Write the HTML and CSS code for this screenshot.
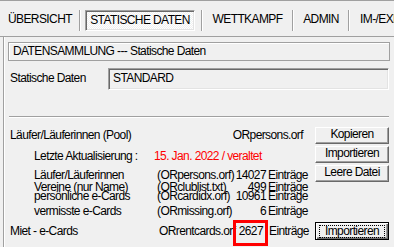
FILE: index.html
```html
<!DOCTYPE html>
<html lang="de">
<head>
<meta charset="utf-8">
<title>Statische Daten</title>
<link rel="stylesheet" href="styles.css">
</head>
<body>
<nav class="tabs">
  <span class="tab first">ÜBERSICHT</span>
  <span class="sep"></span>
  <span class="tab active">STATISCHE DATEN</span>
  <span class="sep"></span>
  <span class="tab t-wk">WETTKAMPF</span>
  <span class="sep"></span>
  <span class="tab t-admin">ADMIN</span>
  <span class="sep"></span>
  <span class="tab t-ie">IM-/EXPORT</span>
</nav>
<main class="panel">
  <div class="caption-box">DATENSAMMLUNG --- Statische Daten</div>
  <div class="field-row">
    <span class="field-label">Statische Daten</span>
    <div class="field">STANDARD</div>
  </div>
  <div class="rule"></div>
  <section class="lower">
    <div class="info">
      <div class="row r-pool"><span>Läufer/Läuferinnen (Pool)</span><span>ORpersons.orf</span></div>
      <div class="row r-upd"><span class="upd-label">Letzte Aktualisierung :</span><span class="red">15. Jan. 2022 / veraltet</span></div>
      <div class="row stat h12"><span>Läufer/Läuferinnen</span><span>(ORpersons.orf)</span><span class="num">14027</span><span class="unit">Einträge</span></div>
      <div class="row stat h9"><span>Vereine (nur Name)</span><span>(ORclublist.txt)</span><span class="num">499</span><span class="unit">Einträge</span></div>
      <div class="row stat h15"><span>persönliche e-Cards</span><span>(ORcardidx.orf)</span><span class="num">10961</span><span class="unit">Einträge</span></div>
      <div class="row stat h12"><span>vermisste e-Cards</span><span>(ORmissing.orf)</span><span class="num">6</span><span class="unit">Einträge</span></div>
    </div>
    <div class="buttons">
      <div class="btn">Kopieren</div>
      <div class="btn">Importieren</div>
      <div class="btn">Leere Datei</div>
    </div>
  </section>
  <div class="miet">
    <span class="m-label">Miet - e-Cards</span>
    <span class="m-file">ORrentcards.orf</span>
    <span class="m-count">2627</span>
    <span class="m-unit">Einträge</span>
    <div class="btn-default"><span class="focus">Importieren</span></div>
  </div>
</main>
</body>
</html>
```
FILE: styles.css
```css
* { box-sizing: border-box; }
html, body { margin: 0; padding: 0; }
body {
  width: 394px;
  height: 247px;
  overflow: hidden;
  background: #f0f0f0;
  font-family: "Liberation Sans", Arial, sans-serif;
  font-size: 12px;
  letter-spacing: -0.6px;
  color: #000;
}

/* tab bar */
.tabs {
  display: flex;
  align-items: flex-start;
  height: 37px;
  border-top: 1px solid #a0a0a0;
  border-bottom: 1px solid #a0a0a0;
  padding: 9px 0 0 8px;
  white-space: nowrap;
  overflow: hidden;
}
.tab {
  flex: none;
  height: 21px;
  line-height: 19px;
  padding-bottom: 2px;
  text-align: center;
}
.tab.first { width: 71px; text-align: left; }
.t-wk { width: 89px; }
.t-admin { width: 54px; }
.t-ie { padding-left: 10px; text-align: left; }
.tab.active {
  width: 110px;
  margin: 0 6px 0 4px;
  padding: 1px 0;
  line-height: 17px;
  border: 1px solid;
  border-color: #a0a0a0 #fff #fff #a0a0a0;
  box-shadow: inset 1px 1px #696969, inset -1px -1px #e3e3e3;
  background-image: repeating-conic-gradient(#fff 0 25%, #f0f0f0 0 50%);
  background-size: 2px 2px;
}
.sep {
  width: 2px;
  height: 21px;
  border-left: 1px solid #a0a0a0;
  border-right: 1px solid #fff;
  flex: none;
}

/* panel */
.panel {
  margin-left: 3px;
  height: 210px;
  border-left: 1px solid #a0a0a0;
  box-shadow: inset 1px 0 #fff;
  padding: 5px 4px 0 4px;
}
.caption-box {
  height: 19px;
  border: 1px solid #a0a0a0;
  box-shadow: inset 1px 1px #fff;
  line-height: 17px;
  padding-left: 4px;
  white-space: nowrap;
}
.field-row {
  display: flex;
  align-items: baseline;
  margin-top: 7px;
}
.field-label {
  width: 100px;
  padding-left: 2px;
}
.field {
  width: 281px;
  height: 22px;
  border: 1px solid;
  border-color: #a0a0a0 #fff #fff #a0a0a0;
  box-shadow: inset 1px 1px #696969, inset -1px -1px #e3e3e3;
  padding: 1px 4px 3px;
  line-height: 16px;
}
.rule {
  margin: 26px 1px 0;
  border-top: 1px solid #a0a0a0;
  border-bottom: 1px solid #fff;
}

/* lower part */
.lower { display: flex; }
.info {
  width: 297px;
  padding-top: 11px;
}
.row {
  line-height: 12px;
  white-space: nowrap;
}
.r-pool {
  height: 21px;
  display: flex;
  justify-content: space-between;
  padding: 0 2px 0 2px;
}
.r-upd {
  height: 19px;
  display: flex;
  padding-left: 26px;
}
.upd-label { width: 120px; }
.red { color: #ff0000; }
.stat {
  display: grid;
  grid-template-columns: 123px 73px 36px auto;
  padding-left: 26px;
}
.h9 { height: 9px; }
.h12 { height: 12px; }
.h15 { height: 15px; }
.num { text-align: right; }
.unit { margin-left: 2px; }

.buttons {
  width: 74px;
  margin: 9px 0 0 10px;
  display: flex;
  flex-direction: column;
  gap: 2px;
}
.btn {
  height: 17px;
  border: 1px solid;
  border-color: #fff #696969 #696969 #fff;
  box-shadow: inset -1px -1px #a0a0a0;
  background: #f0f0f0;
  text-align: center;
  line-height: 11px;
  padding-top: 1px;
}

.miet {
  display: flex;
  align-items: flex-start;
  margin-top: 3px;
  padding-left: 2px;
  line-height: 12px;
  white-space: nowrap;
}
.m-label { width: 149px; margin-top: 5px; }
.m-file { width: 74px; margin-top: 5px; }
.m-count {
  width: 35px;
  height: 26px;
  border: 3px solid #ff0000;
  padding: 2px 2px 6px 0;
  text-align: right;
}
.m-unit { margin-top: 5px; margin-left: 1px; }
.btn-default {
  width: 74px;
  height: 18px;
  margin: 2px 1px 0 auto;
  border: 1px solid #000;
  box-shadow: inset 1px 1px #fff, inset -1px -1px #696969, inset -2px -2px #a0a0a0;
  padding: 2px 2px 0;
}
.focus {
  display: block;
  height: 13px;
  margin: 0 1px;
  border: 1px dotted #000;
  line-height: 11px;
  text-align: center;
}
```
